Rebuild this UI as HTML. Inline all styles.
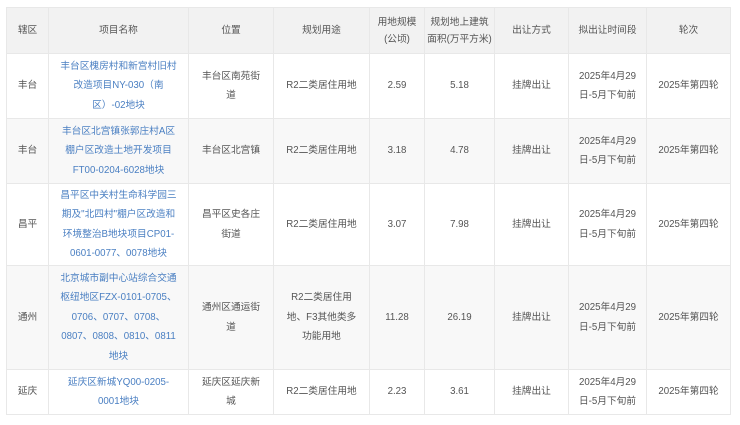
<!DOCTYPE html>
<html><head><meta charset="utf-8"><style>
body{margin:0;background:#fff;width:740px;height:425px;overflow:hidden}
table{position:absolute;left:6px;top:7px;border-collapse:collapse;table-layout:fixed;width:724px;font-family:"Liberation Sans","Noto Sans CJK SC",sans-serif;font-size:9.7px;color:#555;line-height:19.5px}
td,th{border:1px solid #e8e8e8;text-align:center;vertical-align:middle;padding:0;font-weight:normal;box-sizing:border-box;white-space:nowrap;overflow:hidden}
th{background:#f2f2f2;height:46px;line-height:17px}
tr.g td{background:#f8f8f8}
a{color:#4a7fc2;text-decoration:none}
</style></head><body>
<table>
<colgroup><col style="width:42px"><col style="width:140px"><col style="width:85px"><col style="width:96px"><col style="width:55px"><col style="width:70px"><col style="width:74px"><col style="width:78px"><col style="width:84px"></colgroup>
<tr><th>辖区</th><th>项目名称</th><th>位置</th><th>规划用途</th><th>用地规模<br>(公顷)</th><th>规划地上建筑<br>面积(万平方米)</th><th>出让方式</th><th>拟出让时间段</th><th>轮次</th></tr>
<tr style="height:65px"><td>丰台</td><td><a>丰台区槐房村和新宫村旧村<br>改造项目NY-030（南<br>区）-02地块</a></td><td>丰台区南苑街<br>道</td><td>R2二类居住用地</td><td>2.59</td><td>5.18</td><td>挂牌出让</td><td>2025年4月29<br>日-5月下旬前</td><td>2025年第四轮</td></tr>
<tr class="g" style="height:65px"><td>丰台</td><td><a>丰台区北宫镇张郭庄村A区<br>棚户区改造土地开发项目<br>FT00-0204-6028地块</a></td><td>丰台区北宫镇</td><td>R2二类居住用地</td><td>3.18</td><td>4.78</td><td>挂牌出让</td><td>2025年4月29<br>日-5月下旬前</td><td>2025年第四轮</td></tr>
<tr style="height:82px"><td>昌平</td><td><a>昌平区中关村生命科学园三<br>期及"北四村"棚户区改造和<br>环境整治B地块项目CP01-<br>0601-0077、0078地块</a></td><td>昌平区史各庄<br>街道</td><td>R2二类居住用地</td><td>3.07</td><td>7.98</td><td>挂牌出让</td><td>2025年4月29<br>日-5月下旬前</td><td>2025年第四轮</td></tr>
<tr class="g" style="height:104px"><td>通州</td><td><a>北京城市副中心站综合交通<br>枢纽地区FZX-0101-0705、<br>0706、0707、0708、<br>0807、0808、0810、0811<br>地块</a></td><td>通州区通运街<br>道</td><td>R2二类居住用<br>地、F3其他类多<br>功能用地</td><td>11.28</td><td>26.19</td><td>挂牌出让</td><td>2025年4月29<br>日-5月下旬前</td><td>2025年第四轮</td></tr>
<tr style="height:45px"><td>延庆</td><td><a>延庆区新城YQ00-0205-<br>0001地块</a></td><td>延庆区延庆新<br>城</td><td>R2二类居住用地</td><td>2.23</td><td>3.61</td><td>挂牌出让</td><td>2025年4月29<br>日-5月下旬前</td><td>2025年第四轮</td></tr>
</table>
</body></html>
